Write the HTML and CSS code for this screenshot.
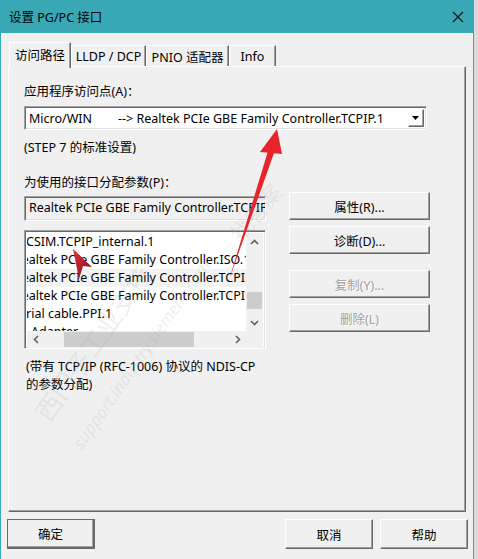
FILE: index.html
```html
<!DOCTYPE html>
<html lang="zh-CN">
<head>
    <meta charset="UTF-8">
    <title>设置 PG/PC 接口</title>
    <link rel="stylesheet" href="styles.css">
</head>
<body>
    <div class="window">
        <div class="titlebar">
            <span>设置 PG/PC 接口</span>
            <span class="close">
                <svg width="12" height="12" viewBox="0 0 12 12"><path d="M1 1 L11 11 M11 1 L1 11" stroke="#111" stroke-width="1.1"/></svg>
            </span>
        </div>

        <div class="tabs">
            <div class="tab active t1">访问路径</div>
            <div class="tab t2">LLDP / DCP</div>
            <div class="tab t3">PNIO 适配器</div>
            <div class="tab t4">Info</div>
        </div>

        <div class="panel">
            <div class="label first">应用程序访问点(A)：</div>
            <div class="combo">
                <span class="combo-text"><span class="ap">Micro/WIN</span>--&gt; Realtek PCIe GBE Family Controller.TCPIP.1</span>
                <span class="drop">
                    <svg width="8" height="4" viewBox="0 0 8 4"><path d="M0 0 H7 L3.5 4 Z" fill="#000"/></svg>
                </span>
            </div>
            <div class="note">(STEP 7 的标准设置)</div>
            <div class="label second">为使用的接口分配参数(P)：</div>

            <div class="params">
                <div class="left-col">
                    <div class="textbox">Realtek PCIe GBE Family Controller.TCPIP.1</div>
                    <div class="listbox">
                        <div class="rows">
                            <div class="row">CSIM.TCPIP_internal.1</div>
                            <div class="row cut">Realtek PCIe GBE Family Controller.ISO.1</div>
                            <div class="row cut sel">Realtek PCIe GBE Family Controller.TCPIP.1</div>
                            <div class="row cut">Realtek PCIe GBE Family Controller.TCPIP.Auto.1</div>
                            <div class="row">rial cable.PPI.1</div>
                            <div class="row ind">Adapter</div>
                        </div>
                        <div class="vscroll">
                            <span class="arrow"><svg width="9" height="6" viewBox="0 0 9 6"><path d="M1 5 L4.5 1.5 L8 5" fill="none" stroke="#606060" stroke-width="1.6"/></svg></span>
                            <span class="vtrack"><span class="vthumb"></span></span>
                            <span class="arrow"><svg width="9" height="6" viewBox="0 0 9 6"><path d="M1 1 L4.5 4.5 L8 1" fill="none" stroke="#606060" stroke-width="1.6"/></svg></span>
                        </div>
                        <div class="hscroll">
                            <span class="arrow"><svg width="6" height="9" viewBox="0 0 6 9"><path d="M5 1 L1.5 4.5 L5 8" fill="none" stroke="#606060" stroke-width="1.6"/></svg></span>
                            <span class="htrack"><span class="hthumb"></span></span>
                            <span class="arrow"><svg width="6" height="9" viewBox="0 0 6 9"><path d="M1 1 L4.5 4.5 L1 8" fill="none" stroke="#606060" stroke-width="1.6"/></svg></span>
                        </div>
                        <div class="corner"></div>
                    </div>
                </div>
                <div class="right-col">
                    <button class="btn">属性(R)...</button>
                    <button class="btn">诊断(D)...</button>
                    <button class="btn off gap">复制(Y)...</button>
                    <button class="btn off">删除(L)</button>
                </div>
            </div>

            <div class="desc">(带有 TCP/IP (RFC-1006) 协议的 NDIS-CP<br>的参数分配)</div>
        </div>

        <div class="footer">
            <button class="btn dlg default">确定</button>
            <span class="spacer"></span>
            <button class="btn dlg">取消</button>
            <button class="btn dlg">帮助</button>
        </div>

        <div class="watermark wm1">support.industry.siemens.com</div>
        <div class="watermark wm2">西门子工业支持</div>
        <div class="watermark wm3">找答案</div>

        <svg class="overlay" width="478" height="559" viewBox="0 0 478 559">
            <path d="M229 280 L268 151 L274 153 Z" fill="#e8242b"/>
            <path d="M277 129 L260 152 L282 154 Z" fill="#e8242b"/>
            <defs>
                <linearGradient id="cone" x1="0" y1="0" x2="1" y2="1">
                    <stop offset="0" stop-color="#e0323f"/>
                    <stop offset="1" stop-color="#7d0c18"/>
                </linearGradient>
            </defs>
            <path d="M73 249 L92 267 L83 266 L79 279 Z" fill="url(#cone)"/>
        </svg>
    </div>
</body>
</html>
```

FILE: styles.css
```css
body {
    margin: 0;
    background-color: #dadada;
    font-family: "Noto Sans", "Noto Sans CJK SC", sans-serif;
    font-size: 12.5px;
    color: #000;
}
.window {
    position: relative;
    width: 472px;
    height: 559px;
    background: #f0f0f0;
    border-left: 1px solid #37a9b4;
    border-right: 1px solid #37a9b4;
    overflow: hidden;
}
.titlebar {
    height: 33px;
    background: #38a9b4;
    display: flex;
    align-items: center;
    justify-content: space-between;
    padding-left: 8px;
}
.close {
    width: 30px;
    display: flex;
    justify-content: center;
}

/* tabs */
.tabs {
    display: flex;
    align-items: flex-end;
    height: 24px;
    margin: 9px 0 0 8px;
    position: relative;
    z-index: 2;
}
.tab {
    height: 21px;
    box-sizing: border-box;
    border-top: 1px solid #fff;
    border-left: 1px solid #fff;
    border-right: 1px solid #696969;
    box-shadow: inset -1px 0 #a0a0a0;
    display: flex;
    align-items: center;
    justify-content: center;
}
.tab.active {
    height: 26px;
    margin-bottom: -2px;
    background: #f0f0f0;
    padding-bottom: 3px;
}
.t1 { width: 62px; }
.t2 { width: 75px; }
.t3 { width: 83px; }
.t4 { width: 47px; }

.panel {
    position: relative;
    margin-left: 7px;
    width: 426px;
    height: 444px;
    border-top: 1px solid #fff;
    border-left: 1px solid #fff;
    border-right: 1px solid #696969;
    border-bottom: 1px solid #696969;
    box-shadow: inset -1px -1px #a0a0a0;
    padding: 0 15px;
}
.label {
    line-height: 16px;
}
.label.first { padding-top: 17px; }
.label.second { margin-top: 19px; }

.combo, .textbox, .listbox {
    box-sizing: border-box;
    border-top: 1px solid #a0a0a0;
    border-left: 1px solid #a0a0a0;
    border-right: 1px solid #fff;
    border-bottom: 1px solid #fff;
    box-shadow: inset 1px 1px #696969, inset -1px -1px #e3e3e3;
}
.combo {
    margin-top: 6px;
    width: 403px;
    height: 24px;
    background: #fff;
    display: flex;
    align-items: center;
    padding: 2px 2px 2px 4px;
}
.combo-text {
    flex: 1;
    white-space: nowrap;
    overflow: hidden;
}
.ap {
    display: inline-block;
    width: 89px;
}
.drop {
    width: 16px;
    height: 18px;
    flex: none;
    box-sizing: border-box;
    border-top: 1px solid #fff;
    border-left: 1px solid #fff;
    border-right: 1px solid #696969;
    border-bottom: 1px solid #696969;
    box-shadow: inset -1px -1px #a0a0a0;
    display: flex;
    align-items: center;
    justify-content: center;
}
.note {
    margin-top: 10px;
    line-height: 16px;
}

.params {
    display: grid;
    grid-template-columns: 242px 141px;
    column-gap: 23px;
    margin-top: 1px;
}
.left-col {
    padding-top: 4px;
}
.textbox {
    height: 25px;
    padding: 0 0 0 4px;
    line-height: 22px;
    white-space: nowrap;
    overflow: hidden;
}
.listbox {
    margin-top: 9px;
    height: 119px;
    background: #fff;
    padding: 2px;
    display: grid;
    grid-template-columns: 1fr 17px;
    grid-template-rows: 98px 17px;
}
.rows {
    overflow: hidden;
    white-space: nowrap;
}
.row {
    height: 18px;
    line-height: 18px;
    margin-left: -1px;
}
.row.cut {
    margin-left: -13px;
}
.row.sel {
    background: #f3f3f3;
}
.row.ind {
    padding-left: 5px;
}
.vscroll {
    background: #f0f0f0;
    display: flex;
    flex-direction: column;
}
.vscroll .arrow {
    height: 17px;
    display: flex;
    align-items: center;
    justify-content: center;
}
.vtrack {
    flex: 1;
    padding-top: 42px;
}
.vthumb {
    display: block;
    margin: 0 1px;
    height: 17px;
    background: #cdcdcd;
}
.hscroll {
    background: #f0f0f0;
    display: flex;
}
.hscroll .arrow {
    width: 17px;
    display: flex;
    align-items: center;
    justify-content: center;
}
.htrack {
    flex: 1;
    padding-left: 20px;
    padding-top: 1px;
}
.hthumb {
    display: block;
    width: 130px;
    height: 15px;
    background: #cdcdcd;
}
.corner {
    background: #f0f0f0;
}

.right-col {
    display: flex;
    flex-direction: column;
    gap: 6px;
}
.btn {
    font: inherit;
    color: #000;
    background: #f0f0f0;
    height: 28px;
    border-top: 1px solid #fff;
    border-left: 1px solid #fff;
    border-right: 1px solid #696969;
    border-bottom: 1px solid #696969;
    box-shadow: inset -1px -1px #a0a0a0;
    padding: 0;
}
.btn.off {
    color: #a0a0a0;
    text-shadow: 1px 1px #fff;
}
.btn.gap {
    margin-top: 10px;
}
.desc {
    margin-top: 9px;
    padding-left: 2px;
    line-height: 18px;
}

.footer {
    display: flex;
    margin-top: 7px;
    padding: 0 5px 0 6px;
    gap: 7px;
}
.spacer {
    flex: 1;
}
.btn.dlg {
    width: 88px;
    height: 30px;
}
.btn.default {
    outline: 1px solid #6b6b6b;
    outline-offset: -1px;
    border-right: 2px solid #696969;
    border-bottom: 2px solid #696969;
}

.watermark {
    position: absolute;
    color: rgba(170, 170, 170, 0.2);
    white-space: nowrap;
    pointer-events: none;
    transform-origin: left bottom;
}
.wm1 {
    left: 85px;
    top: 430px;
    font-size: 17px;
    font-style: italic;
    transform: rotate(-55deg);
}
.wm2 {
    left: 55px;
    top: 390px;
    font-size: 26px;
    transform: rotate(-55deg);
}
.wm3 {
    left: 245px;
    top: 215px;
    font-size: 22px;
    transform: rotate(-50deg);
}
.overlay {
    position: absolute;
    left: -1px;
    top: 0;
    pointer-events: none;
}
```
